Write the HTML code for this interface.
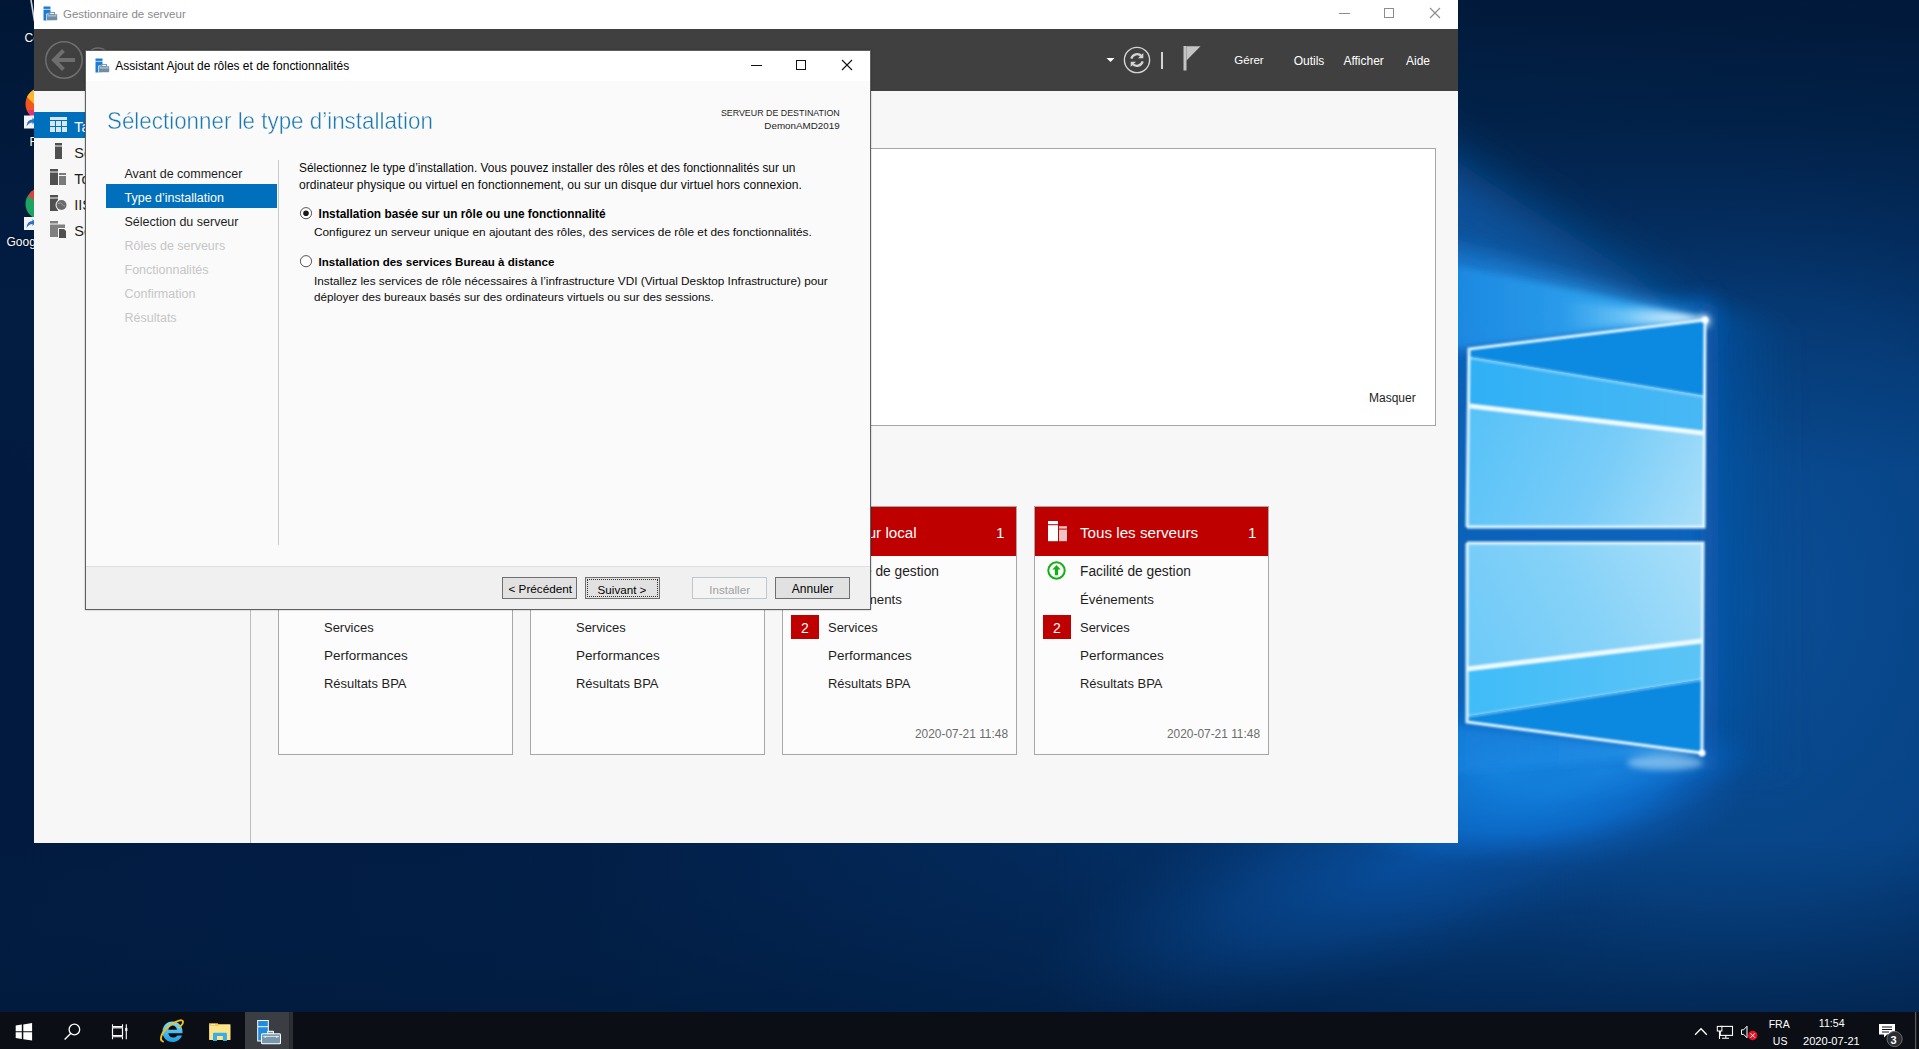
<!DOCTYPE html>
<html><head><meta charset="utf-8">
<style>
*{margin:0;padding:0;box-sizing:border-box}
html,body{width:1919px;height:1049px;overflow:hidden;font-family:"Liberation Sans",sans-serif;}
body{position:relative;background:#011633;}
.a{position:absolute}
.t{position:absolute;white-space:pre;line-height:1}
</style></head><body>
<div class="a" style="left:0;top:0;width:1919px;height:1049px;overflow:hidden"><svg width="1919" height="1049" viewBox="0 0 1919 1049">
<defs>
<linearGradient id="bgx" x1="0" y1="0" x2="1919" y2="0" gradientUnits="userSpaceOnUse">
 <stop offset="0" stop-color="#021a40"/>
 <stop offset="0.3" stop-color="#021e46"/>
 <stop offset="0.55" stop-color="#032a5c"/>
 <stop offset="0.75" stop-color="#043a78"/>
 <stop offset="1" stop-color="#03336c"/>
</linearGradient>
<linearGradient id="topd" x1="0" y1="0" x2="0" y2="1049" gradientUnits="userSpaceOnUse">
 <stop offset="0" stop-color="#011634" stop-opacity="0.9"/>
 <stop offset="0.12" stop-color="#011a3a" stop-opacity="0.75"/>
 <stop offset="0.3" stop-color="#021f45" stop-opacity="0.3"/>
 <stop offset="0.45" stop-color="#02234a" stop-opacity="0"/>
 <stop offset="0.8" stop-color="#02234a" stop-opacity="0"/>
 <stop offset="0.97" stop-color="#011b3c" stop-opacity="0.6"/>
</linearGradient>
<radialGradient id="rm" cx="1740" cy="600" r="560" gradientUnits="userSpaceOnUse" gradientTransform="translate(1740 600) scale(0.85 1) translate(-1740 -600)">
 <stop offset="0" stop-color="#0b4f98" stop-opacity="0.95"/>
 <stop offset="0.55" stop-color="#094a90" stop-opacity="0.7"/>
 <stop offset="1" stop-color="#063a78" stop-opacity="0"/>
</radialGradient>
<linearGradient id="pt" x1="1469" y1="420" x2="1704" y2="527" gradientUnits="userSpaceOnUse">
 <stop offset="0" stop-color="#58c2f8"/>
 <stop offset="0.55" stop-color="#78ccf8"/>
 <stop offset="1" stop-color="#aadff9"/>
</linearGradient>
<linearGradient id="ptm" x1="1469" y1="0" x2="1704" y2="0" gradientUnits="userSpaceOnUse">
 <stop offset="0" stop-color="#30b0f6"/>
 <stop offset="1" stop-color="#48b8f4"/>
</linearGradient>
<linearGradient id="pbm" x1="1467" y1="0" x2="1702" y2="0" gradientUnits="userSpaceOnUse">
 <stop offset="0" stop-color="#40bcf8"/>
 <stop offset="1" stop-color="#5cc4f6"/>
</linearGradient>
<linearGradient id="pb" x1="1467" y1="660" x2="1703" y2="543" gradientUnits="userSpaceOnUse">
 <stop offset="0" stop-color="#6ecaf8"/>
 <stop offset="0.5" stop-color="#86d2f8"/>
 <stop offset="1" stop-color="#aadff9"/>
</linearGradient>
<filter id="b40" x="-50%" y="-50%" width="200%" height="200%"><feGaussianBlur stdDeviation="40"/></filter>
<filter id="b25" x="-50%" y="-50%" width="200%" height="200%"><feGaussianBlur stdDeviation="25"/></filter>
<filter id="b10" x="-50%" y="-50%" width="200%" height="200%"><feGaussianBlur stdDeviation="10"/></filter>
<filter id="b5" x="-50%" y="-50%" width="200%" height="200%"><feGaussianBlur stdDeviation="5"/></filter>
<linearGradient id="ubs" x1="1300" y1="0" x2="1705" y2="0" gradientUnits="userSpaceOnUse"><stop offset="0" stop-color="#0a58b0" stop-opacity="0.75"/><stop offset="1" stop-color="#1a80d8" stop-opacity="0.45"/></linearGradient>
<linearGradient id="ubm" x1="1420" y1="0" x2="1705" y2="0" gradientUnits="userSpaceOnUse"><stop offset="0" stop-color="#1478d4" stop-opacity="0.75"/><stop offset="1" stop-color="#3aaaf4" stop-opacity="0.85"/></linearGradient>
<linearGradient id="ubc" x1="1440" y1="0" x2="1706" y2="0" gradientUnits="userSpaceOnUse"><stop offset="0" stop-color="#1a8ae6" stop-opacity="0.8"/><stop offset="0.7" stop-color="#34aaf2" stop-opacity="0.85"/><stop offset="1" stop-color="#e0f6ff" stop-opacity="1"/></linearGradient>
<linearGradient id="lbm" x1="1400" y1="0" x2="1702" y2="0" gradientUnits="userSpaceOnUse"><stop offset="0" stop-color="#1680dc" stop-opacity="0.85"/><stop offset="1" stop-color="#2a9cf0" stop-opacity="0.8"/></linearGradient>
<linearGradient id="lbc" x1="1440" y1="0" x2="1703" y2="0" gradientUnits="userSpaceOnUse"><stop offset="0" stop-color="#1a8ae8" stop-opacity="0.5"/><stop offset="0.7" stop-color="#2a9cf0" stop-opacity="0.6"/><stop offset="1" stop-color="#c0ecff" stop-opacity="0.9"/></linearGradient>
<linearGradient id="lgs" x1="1702" y1="753" x2="1050" y2="1000" gradientUnits="userSpaceOnUse"><stop offset="0" stop-color="#0c6ad0" stop-opacity="0.9"/><stop offset="0.45" stop-color="#0a58b0" stop-opacity="0.7"/><stop offset="1" stop-color="#063e80" stop-opacity="0"/></linearGradient>
<radialGradient id="rg1"><stop offset="0" stop-color="#0a5cb8" stop-opacity="0.6"/><stop offset="0.5" stop-color="#0a52a4" stop-opacity="0.4"/><stop offset="1" stop-color="#063e80" stop-opacity="0"/></radialGradient>
<radialGradient id="rg2"><stop offset="0" stop-color="#1480dc" stop-opacity="0.9"/><stop offset="0.6" stop-color="#0c6ccc" stop-opacity="0.6"/><stop offset="1" stop-color="#0a5cb8" stop-opacity="0"/></radialGradient>
<radialGradient id="rg3"><stop offset="0" stop-color="#2a9cf0" stop-opacity="0.9"/><stop offset="1" stop-color="#1a8ae6" stop-opacity="0"/></radialGradient>
<radialGradient id="rg4"><stop offset="0" stop-color="#1484e0" stop-opacity="0.9"/><stop offset="0.6" stop-color="#0c70d0" stop-opacity="0.55"/><stop offset="1" stop-color="#0a5cb8" stop-opacity="0"/></radialGradient>
<linearGradient id="halor" x1="1700" y1="0" x2="1800" y2="0" gradientUnits="userSpaceOnUse"><stop offset="0" stop-color="#0a5ab0" stop-opacity="0.8"/><stop offset="1" stop-color="#0a4a90" stop-opacity="0"/></linearGradient>
<linearGradient id="flare" x1="1560" y1="0" x2="1706" y2="0" gradientUnits="userSpaceOnUse"><stop offset="0" stop-color="#8ad8ff" stop-opacity="0"/><stop offset="1" stop-color="#f0fbff" stop-opacity="0.95"/></linearGradient>
<filter id="b3" x="-50%" y="-50%" width="200%" height="200%"><feGaussianBlur stdDeviation="3"/></filter>
<filter id="b1" x="-50%" y="-50%" width="200%" height="200%"><feGaussianBlur stdDeviation="1"/></filter>
</defs>
<rect width="1919" height="1049" fill="url(#bgx)"/>
<rect width="1919" height="1049" fill="url(#rm)"/>
<rect width="1919" height="1049" fill="url(#topd)"/>
<!-- halo2 -->
<polygon points="1440,330 1712,300 1712,770 1440,760" fill="#0a6ac6" opacity="0.8" filter="url(#b10)"/>
<polygon points="1700,300 1800,330 1800,780 1700,770" fill="url(#halor)" filter="url(#b10)"/>
<!-- upper beam soft -->
<polygon points="1300,60 1705,322 1300,380" fill="url(#ubs)" filter="url(#b25)"/>
<polygon points="1420,235 1705,320 1420,352" fill="url(#ubm)" filter="url(#b10)"/>
<polygon points="1440,262 1706,319 1440,350" fill="url(#ubc)" filter="url(#b3)"/>
<polygon points="1560,300 1706,319 1560,330" fill="url(#flare)" filter="url(#b3)"/>
<circle cx="1704" cy="321" r="7" fill="#d8f4ff" opacity="0.7" filter="url(#b3)"/>
<!-- lower glow -->
<ellipse cx="1420" cy="860" rx="400" ry="110" transform="rotate(-18 1420 860)" fill="url(#rg1)"/>
<ellipse cx="1560" cy="790" rx="200" ry="60" transform="rotate(-12 1560 790)" fill="url(#rg2)"/>
<ellipse cx="1600" cy="772" rx="120" ry="30" transform="rotate(-6 1600 772)" fill="url(#rg3)"/>
<ellipse cx="1500" cy="775" rx="250" ry="95" transform="rotate(2 1500 775)" fill="url(#rg4)"/>
<polygon points="1440,724 1703,753 1440,775" fill="url(#lbc)" filter="url(#b5)"/>
<!-- halo -->
<!-- panes -->
<polygon points="1469,349 1705,320 1704,527 1467,527" fill="url(#pt)"/>
<polygon points="1469,349 1705,320 1704,396 1468,357" fill="#0c8ae2"/>
<polygon points="1468,357 1704,396 1703,432 1470,405" fill="url(#ptm)"/>
<polygon points="1467,543 1703,543 1702,753 1467,722" fill="url(#pb)"/>
<polygon points="1467,716 1702,679 1702,753 1467,722" fill="#0b88e0"/>
<polygon points="1467,668 1702,640 1702,679 1467,716" fill="url(#pbm)"/>
<ellipse cx="1665" cy="763" rx="38" ry="7" fill="#bfe8ff" opacity="0.55" filter="url(#b3)"/>
<g filter="url(#b1)">
<polygon points="1468,356 1704,395 1704,398 1468,359" fill="#9ad8fa" opacity="0.7"/>
<polygon points="1467,715 1702,678 1702,681 1467,718" fill="#9ad8fa" opacity="0.6"/>
<polygon points="1470,403.5 1703,430.5 1703,435.5 1470,408.5" fill="#f0faff"/>
<polygon points="1467,666.5 1702,638.5 1702,643.5 1467,671.5" fill="#f0faff"/>
<polyline points="1467,527 1469,349 1705,320 1704,527 1467,527" fill="none" stroke="#e0f6ff" stroke-width="3"/>
<polyline points="1467,543 1703,543 1702,753 1467,722 1467,543" fill="none" stroke="#e0f6ff" stroke-width="3"/>
<circle cx="1705" cy="320" r="3.5" fill="#ffffff"/>
<circle cx="1702" cy="753" r="3.5" fill="#ffffff"/>
</g>
</svg>
</div>
<svg class="a" style="left:28px;top:0" width="8" height="22" viewBox="0 0 8 22"><path d="M3 0L6.5 21" stroke="#c8d0dc" stroke-width="1.6"/></svg>
<div class="t" style="left:24.60px;top:32.44px;font-size:12px;color:#ffffff;font-weight:400;text-shadow:0 0 2px #000">Co</div>
<svg class="a" style="left:0;top:80px" width="34" height="60" viewBox="0 0 34 60">
 <circle cx="41" cy="24" r="15.5" fill="#f2581c"/>
 <path d="M27 17 A15.5 15.5 0 0 1 34 9.5 L34 24Z" fill="#ffb52a"/>
 <path d="M27 30 A15.5 15.5 0 0 0 34 38 L34 30Z" fill="#e0347a"/>
 <rect x="24" y="35.5" width="11" height="13" fill="#f4f4f4"/>
 <path d="M26.5 46.5 Q27 39.5 32.5 39.5 L32.5 37.5 L35.5 41 L32.5 44.5 L32.5 42.5 Q29 42.5 26.5 46.5Z" fill="#2a6fd0"/>
</svg>
<div class="t" style="left:29.50px;top:135.64px;font-size:12px;color:#ffffff;font-weight:400;text-shadow:0 0 2px #000">Fi</div>
<svg class="a" style="left:0;top:180px" width="34" height="60" viewBox="0 0 34 60">
 <circle cx="41" cy="24" r="15.5" fill="#1ea362"/>
 <path d="M28 16 A15.5 15.5 0 0 1 34 9.5 L34 20Z" fill="#db4437"/>
 <rect x="24" y="37" width="11" height="13" fill="#f4f4f4"/>
 <path d="M26.5 48 Q27 41 32.5 41 L32.5 39 L35.5 42.5 L32.5 46 L32.5 44 Q29 44 26.5 48Z" fill="#2a6fd0"/>
</svg>
<div class="t" style="left:6.50px;top:235.64px;font-size:12px;color:#ffffff;font-weight:400;text-shadow:0 0 2px #000">Goog</div>
<div class="a" style="left:34px;top:0px;width:1424px;height:843px;background:#f7f7f7;"></div>
<div class="a" style="left:34px;top:0px;width:1424px;height:29px;background:#ffffff;"></div>
<svg class="a" style="left:43px;top:6px" width="15" height="15" viewBox="0 0 15 15">
  <rect x="0.5" y="0.5" width="7" height="2.4" fill="#1c7cd5"/>
  <rect x="0.5" y="3.6" width="7" height="10.9" fill="#1c7cd5"/>
  <rect x="3.2" y="7.6" width="11.6" height="7.2" rx="0.8" fill="#ffffff"/>
  <rect x="3.8" y="8.2" width="10.4" height="6" rx="0.4" fill="#6e8ea8"/>
  <rect x="6.3" y="6.4" width="5.2" height="2" fill="none" stroke="#6e8ea8" stroke-width="0.9"/>
  <path d="M4.6 9.9H13.4" stroke="#dfe7ee" stroke-width="0.8"/>
</svg>
<div class="t" style="left:63.00px;top:8.67px;font-size:11.5px;color:#8a8a8a;font-weight:400;">Gestionnaire de serveur</div>
<div class="a" style="left:1339px;top:13px;width:11px;height:1px;background:#8c8c8c;"></div>
<div class="a" style="left:1384px;top:8px;width:10px;height:10px;border:1px solid #8c8c8c"></div>
<svg class="a" style="left:1429px;top:7px" width="12" height="12" viewBox="0 0 12 12"><path d="M1 1L11 11M11 1L1 11" stroke="#8c8c8c" stroke-width="1.1"/></svg>
<div class="a" style="left:34px;top:29px;width:1424px;height:62px;background:#404040;"></div>
<svg class="a" style="left:44px;top:40px" width="40" height="40" viewBox="0 0 40 40">
  <circle cx="20" cy="20" r="18.2" fill="none" stroke="#6e6e6e" stroke-width="1.5"/>
  <path d="M10 20H31" stroke="#6e6e6e" stroke-width="4"/>
  <path d="M19.5 10.5L10 20L19.5 29.5" fill="none" stroke="#6e6e6e" stroke-width="4"/>
</svg>
<svg class="a" style="left:80px;top:40px" width="40" height="40" viewBox="0 0 40 40">
  <circle cx="18.1" cy="20.2" r="12.2" fill="none" stroke="#6e6e6e" stroke-width="1.5"/>
</svg>
<svg class="a" style="left:1106px;top:57px" width="9" height="6" viewBox="0 0 9 6"><path d="M0.5 1H8.5L4.5 5Z" fill="#ffffff"/></svg>
<svg class="a" style="left:1123px;top:46px" width="28" height="28" viewBox="0 0 28 28">
  <circle cx="14" cy="14" r="12.6" fill="none" stroke="#d4d4d4" stroke-width="1.4"/>
  <path d="M8.3 12.6A6 6 0 0 1 18.6 10.2" fill="none" stroke="#d4d4d4" stroke-width="2.2"/>
  <path d="M20.3 7V12.3H15Z" fill="#d4d4d4"/>
  <path d="M19.7 15.4A6 6 0 0 1 9.4 17.8" fill="none" stroke="#d4d4d4" stroke-width="2.2"/>
  <path d="M7.7 21V15.7H13Z" fill="#d4d4d4"/>
</svg>
<div class="a" style="left:1161px;top:52px;width:2px;height:17px;background:#d4d4d4;"></div>
<svg class="a" style="left:1183px;top:46px" width="19" height="25" viewBox="0 0 19 25">
  <rect x="0.5" y="0" width="3" height="24.5" fill="#c4c4c4"/>
  <path d="M3.5 0.3H17.5L3.5 14.5Z" fill="#c4c4c4"/>
</svg>
<div class="t" style="left:1234.30px;top:55.27px;font-size:11.5px;color:#ffffff;font-weight:400;">Gérer</div>
<div class="t" style="left:1293.70px;top:54.84px;font-size:12px;color:#ffffff;font-weight:400;">Outils</div>
<div class="t" style="left:1343.40px;top:54.84px;font-size:12px;color:#ffffff;font-weight:400;">Afficher</div>
<div class="t" style="left:1406.00px;top:54.84px;font-size:12px;color:#ffffff;font-weight:400;">Aide</div>
<div class="a" style="left:34px;top:112px;width:216px;height:26px;background:#0070bc;"></div>
<div class="a" style="left:250px;top:91px;width:1px;height:752px;background:#bcbcbc;"></div>
<svg class="a" style="left:50px;top:117px" width="18" height="17" viewBox="0 0 18 17"><rect x="0" y="0" width="17" height="3" fill="#d6e8f6"/><rect x="0" y="4" width="5" height="5" fill="#d6e8f6"/><rect x="6" y="4" width="5" height="5" fill="#d6e8f6"/><rect x="12" y="4" width="5" height="5" fill="#d6e8f6"/><rect x="0" y="10" width="5" height="5" fill="#d6e8f6"/><rect x="6" y="10" width="5" height="5" fill="#d6e8f6"/><rect x="12" y="10" width="5" height="5" fill="#d6e8f6"/></svg>
<div class="t" style="left:74.30px;top:119.73px;font-size:14.5px;color:#ffffff;font-weight:400;">Tableau de bord</div>
<svg class="a" style="left:50px;top:143px" width="18" height="17" viewBox="0 0 18 17"><rect x="5" y="0" width="7" height="2.5" fill="#505050"/><rect x="5" y="3.5" width="7" height="12.5" fill="#505050"/></svg>
<div class="t" style="left:74.30px;top:145.73px;font-size:14.5px;color:#1e1e1e;font-weight:400;">Serveur local</div>
<svg class="a" style="left:50px;top:169px" width="18" height="17" viewBox="0 0 18 17"><rect x="0" y="0" width="8" height="2.5" fill="#505050"/><rect x="0" y="3.5" width="8" height="12.5" fill="#505050"/><rect x="9" y="4" width="7" height="2" fill="#7a7a7a"/><rect x="9" y="7" width="7" height="9" fill="#7a7a7a"/></svg>
<div class="t" style="left:74.30px;top:171.73px;font-size:14.5px;color:#1e1e1e;font-weight:400;">Tous les serveurs</div>
<svg class="a" style="left:50px;top:195px" width="18" height="17" viewBox="0 0 18 17"><rect x="0" y="0" width="8" height="2.5" fill="#505050"/><rect x="0" y="3.5" width="8" height="12.5" fill="#505050"/><circle cx="11.5" cy="10" r="6" fill="#f7f7f7"/><circle cx="11.5" cy="10" r="5" fill="#6a6a6a"/><path d="M8 8.5Q11 7 12 9T15 11" stroke="#a0a0a0" fill="none" stroke-width="1"/></svg>
<div class="t" style="left:74.30px;top:197.73px;font-size:14.5px;color:#1e1e1e;font-weight:400;">IIS</div>
<svg class="a" style="left:50px;top:221px" width="18" height="17" viewBox="0 0 18 17"><rect x="0" y="0" width="8" height="2.5" fill="#808080"/><rect x="0" y="3.5" width="15" height="12.5" fill="#808080"/><rect x="8" y="7" width="8" height="10" fill="#f7f7f7"/><path d="M9 8H14L16 10V17H9Z" fill="#505050"/></svg>
<div class="t" style="left:74.30px;top:223.73px;font-size:14.5px;color:#1e1e1e;font-weight:400;">Services de fichiers et de stockage</div>
<div class="a" style="left:700px;top:148px;width:736px;height:278px;background:#ffffff;border:1px solid #a6a6a6"></div>
<div class="t" style="left:1369.00px;top:391.64px;font-size:12px;color:#1e1e1e;font-weight:400;">Masquer</div>
<div class="a" style="left:278px;top:506px;width:235px;height:249px;background:#fcfcfc;border:1px solid #a8a8a8"></div>
<div class="a" style="left:279px;top:507px;width:233px;height:49px;background:#be0000;"></div>
<svg class="a" style="left:291.5px;top:520.5px" width="20" height="21" viewBox="0 0 20 21"><rect x="0" y="0" width="10" height="3.2" fill="#fff"/><rect x="0" y="4.2" width="10" height="16" fill="#fff"/><rect x="11" y="5.2" width="8" height="2.4" fill="#f0c4c4"/><rect x="11" y="8.6" width="8" height="11.6" fill="#f0c4c4"/></svg>
<div class="t" style="left:324.00px;top:525.33px;font-size:15.2px;color:#ffffff;font-weight:400;">Rôles et groupes</div>
<div class="t" style="left:492.00px;top:525.33px;font-size:15.2px;color:#ffffff;font-weight:400;">1</div>
<div class="t" style="left:324.00px;top:565.04px;font-size:13.77px;color:#1e1e1e;font-weight:400;">Facilité de gestion</div>
<div class="t" style="left:324.00px;top:592.64px;font-size:13.3px;color:#1e1e1e;font-weight:400;">Événements</div>
<div class="t" style="left:324.00px;top:621.54px;font-size:12.95px;color:#1e1e1e;font-weight:400;">Services</div>
<div class="t" style="left:324.00px;top:649.21px;font-size:13.46px;color:#1e1e1e;font-weight:400;">Performances</div>
<div class="t" style="left:324.00px;top:677.95px;font-size:12.94px;color:#1e1e1e;font-weight:400;">Résultats BPA</div>
<div class="a" style="left:530px;top:506px;width:235px;height:249px;background:#fcfcfc;border:1px solid #a8a8a8"></div>
<div class="a" style="left:531px;top:507px;width:233px;height:49px;background:#be0000;"></div>
<svg class="a" style="left:543.5px;top:520.5px" width="20" height="21" viewBox="0 0 20 21"><rect x="0" y="0" width="10" height="3.2" fill="#fff"/><rect x="0" y="4.2" width="10" height="16" fill="#fff"/><rect x="11" y="5.2" width="8" height="2.4" fill="#f0c4c4"/><rect x="11" y="8.6" width="8" height="11.6" fill="#f0c4c4"/></svg>
<div class="t" style="left:576.00px;top:525.33px;font-size:15.2px;color:#ffffff;font-weight:400;">IIS</div>
<div class="t" style="left:744.00px;top:525.33px;font-size:15.2px;color:#ffffff;font-weight:400;">1</div>
<div class="t" style="left:576.00px;top:565.04px;font-size:13.77px;color:#1e1e1e;font-weight:400;">Facilité de gestion</div>
<div class="t" style="left:576.00px;top:592.64px;font-size:13.3px;color:#1e1e1e;font-weight:400;">Événements</div>
<div class="t" style="left:576.00px;top:621.54px;font-size:12.95px;color:#1e1e1e;font-weight:400;">Services</div>
<div class="t" style="left:576.00px;top:649.21px;font-size:13.46px;color:#1e1e1e;font-weight:400;">Performances</div>
<div class="t" style="left:576.00px;top:677.95px;font-size:12.94px;color:#1e1e1e;font-weight:400;">Résultats BPA</div>
<div class="a" style="left:782px;top:506px;width:235px;height:249px;background:#fcfcfc;border:1px solid #a8a8a8"></div>
<div class="a" style="left:783px;top:507px;width:233px;height:49px;background:#be0000;"></div>
<svg class="a" style="left:795.5px;top:520.5px" width="20" height="21" viewBox="0 0 20 21"><rect x="0" y="0" width="10" height="3.2" fill="#fff"/><rect x="0" y="4.2" width="10" height="16" fill="#fff"/><rect x="11" y="5.2" width="8" height="2.4" fill="#f0c4c4"/><rect x="11" y="8.6" width="8" height="11.6" fill="#f0c4c4"/></svg>
<div class="t" style="left:828.00px;top:525.33px;font-size:15.2px;color:#ffffff;font-weight:400;">Serveur local</div>
<div class="t" style="left:996.00px;top:525.33px;font-size:15.2px;color:#ffffff;font-weight:400;">1</div>
<div class="t" style="left:828.00px;top:565.04px;font-size:13.77px;color:#1e1e1e;font-weight:400;">Facilité de gestion</div>
<div class="t" style="left:828.00px;top:592.64px;font-size:13.3px;color:#1e1e1e;font-weight:400;">Événements</div>
<div class="t" style="left:828.00px;top:621.54px;font-size:12.95px;color:#1e1e1e;font-weight:400;">Services</div>
<div class="t" style="left:828.00px;top:649.21px;font-size:13.46px;color:#1e1e1e;font-weight:400;">Performances</div>
<div class="t" style="left:828.00px;top:677.95px;font-size:12.94px;color:#1e1e1e;font-weight:400;">Résultats BPA</div>
<svg class="a" style="left:794.5px;top:560.7px" width="19" height="19" viewBox="0 0 19 19"><circle cx="9.5" cy="9.5" r="8.2" fill="none" stroke="#12b012" stroke-width="2"/><path d="M9.5 4L13.6 8.6H11.1V14.3H7.9V8.6H5.4Z" fill="#12b012"/></svg>
<div class="a" style="left:791px;top:615px;width:28px;height:24px;background:#be0000;"></div>
<div class="t" style="left:801.00px;top:620.95px;font-size:14px;color:#ffffff;font-weight:400;">2</div>
<div class="t" style="right:911.00px;top:729.03px;font-size:11.9px;color:#6d6d6d;font-weight:400;">2020-07-21 11:48</div>
<div class="a" style="left:1034px;top:506px;width:235px;height:249px;background:#fcfcfc;border:1px solid #a8a8a8"></div>
<div class="a" style="left:1035px;top:507px;width:233px;height:49px;background:#be0000;"></div>
<svg class="a" style="left:1047.5px;top:520.5px" width="20" height="21" viewBox="0 0 20 21"><rect x="0" y="0" width="10" height="3.2" fill="#fff"/><rect x="0" y="4.2" width="10" height="16" fill="#fff"/><rect x="11" y="5.2" width="8" height="2.4" fill="#f0c4c4"/><rect x="11" y="8.6" width="8" height="11.6" fill="#f0c4c4"/></svg>
<div class="t" style="left:1080.00px;top:525.33px;font-size:15.2px;color:#ffffff;font-weight:400;">Tous les serveurs</div>
<div class="t" style="left:1248.00px;top:525.33px;font-size:15.2px;color:#ffffff;font-weight:400;">1</div>
<div class="t" style="left:1080.00px;top:565.04px;font-size:13.77px;color:#1e1e1e;font-weight:400;">Facilité de gestion</div>
<div class="t" style="left:1080.00px;top:592.64px;font-size:13.3px;color:#1e1e1e;font-weight:400;">Événements</div>
<div class="t" style="left:1080.00px;top:621.54px;font-size:12.95px;color:#1e1e1e;font-weight:400;">Services</div>
<div class="t" style="left:1080.00px;top:649.21px;font-size:13.46px;color:#1e1e1e;font-weight:400;">Performances</div>
<div class="t" style="left:1080.00px;top:677.95px;font-size:12.94px;color:#1e1e1e;font-weight:400;">Résultats BPA</div>
<svg class="a" style="left:1046.5px;top:560.7px" width="19" height="19" viewBox="0 0 19 19"><circle cx="9.5" cy="9.5" r="8.2" fill="none" stroke="#12b012" stroke-width="2"/><path d="M9.5 4L13.6 8.6H11.1V14.3H7.9V8.6H5.4Z" fill="#12b012"/></svg>
<div class="a" style="left:1043px;top:615px;width:28px;height:24px;background:#be0000;"></div>
<div class="t" style="left:1053.00px;top:620.95px;font-size:14px;color:#ffffff;font-weight:400;">2</div>
<div class="t" style="right:659.00px;top:729.03px;font-size:11.9px;color:#6d6d6d;font-weight:400;">2020-07-21 11:48</div>
<div class="a" style="left:85px;top:50px;width:786px;height:560px;background:#fafafa;border:1px solid #5f5f5f;box-shadow:0 0 1.5px rgba(0,0,0,.35)"></div>
<div class="a" style="left:86px;top:51px;width:784px;height:30px;background:#ffffff;"></div>
<svg class="a" style="left:94.5px;top:57.5px" width="15" height="15" viewBox="0 0 15 15">
  <rect x="0.5" y="0.5" width="7" height="2.4" fill="#1c7cd5"/>
  <rect x="0.5" y="3.6" width="7" height="10.9" fill="#1c7cd5"/>
  <rect x="3.2" y="7.6" width="11.6" height="7.2" rx="0.8" fill="#ffffff"/>
  <rect x="3.8" y="8.2" width="10.4" height="6" rx="0.4" fill="#6e8ea8"/>
  <rect x="6.3" y="6.4" width="5.2" height="2" fill="none" stroke="#6e8ea8" stroke-width="0.9"/>
  <path d="M4.6 9.9H13.4" stroke="#dfe7ee" stroke-width="0.8"/>
</svg>
<div class="t" style="left:115.30px;top:61.08px;font-size:11.96px;color:#000000;font-weight:400;">Assistant Ajout de rôles et de fonctionnalités</div>
<div class="a" style="left:751px;top:65px;width:11px;height:1px;background:#111111;"></div>
<div class="a" style="left:796px;top:60px;width:10px;height:10px;border:1px solid #111111"></div>
<svg class="a" style="left:841px;top:59px" width="12" height="12" viewBox="0 0 12 12"><path d="M1 1L11 11M11 1L1 11" stroke="#111111" stroke-width="1.1"/></svg>
<div class="t" style="left:107.00px;top:109.28px;font-size:24px;color:#1a78b0;font-weight:400;transform:scaleX(0.9325);transform-origin:0 0;-webkit-text-stroke:0.45px #fafafa">Sélectionner le type d’installation</div>
<div class="t" style="right:1079.30px;top:109.19px;font-size:8.87px;color:#1e1e1e;font-weight:400;">SERVEUR DE DESTINATION</div>
<div class="t" style="right:1079.30px;top:120.67px;font-size:9.84px;color:#1e1e1e;font-weight:400;">DemonAMD2019</div>
<div class="a" style="left:106px;top:184px;width:171px;height:24px;background:#0070bc;"></div>
<div class="a" style="left:278px;top:160px;width:1px;height:385px;background:#c8c8c8;"></div>
<div class="t" style="left:124.50px;top:168.02px;font-size:12.5px;color:#1e1e1e;font-weight:400;">Avant de commencer</div>
<div class="t" style="left:124.50px;top:192.02px;font-size:12.5px;color:#ffffff;font-weight:400;">Type d’installation</div>
<div class="t" style="left:124.50px;top:216.02px;font-size:12.5px;color:#1e1e1e;font-weight:400;">Sélection du serveur</div>
<div class="t" style="left:124.50px;top:240.02px;font-size:12.5px;color:#c6c6c6;font-weight:400;">Rôles de serveurs</div>
<div class="t" style="left:124.50px;top:264.02px;font-size:12.5px;color:#c6c6c6;font-weight:400;">Fonctionnalités</div>
<div class="t" style="left:124.50px;top:288.02px;font-size:12.5px;color:#c6c6c6;font-weight:400;">Confirmation</div>
<div class="t" style="left:124.50px;top:312.02px;font-size:12.5px;color:#c6c6c6;font-weight:400;">Résultats</div>
<div class="t" style="left:299.00px;top:162.94px;font-size:11.89px;color:#0a0a0a;font-weight:400;">Sélectionnez le type d’installation. Vous pouvez installer des rôles et des fonctionnalités sur un</div>
<div class="t" style="left:299.00px;top:178.96px;font-size:12.1px;color:#0a0a0a;font-weight:400;">ordinateur physique ou virtuel en fonctionnement, ou sur un disque dur virtuel hors connexion.</div>
<svg class="a" style="left:299px;top:206px" width="14" height="14" viewBox="0 0 14 14"><circle cx="7" cy="7.2" r="5.6" fill="#ffffff" stroke="#444444" stroke-width="0.9"/><circle cx="7" cy="7.2" r="2.8" fill="#1a1a1a"/></svg>
<div class="t" style="left:318.60px;top:209.17px;font-size:11.85px;color:#000000;font-weight:700;">Installation basée sur un rôle ou une fonctionnalité</div>
<div class="t" style="left:314.00px;top:227.09px;font-size:11.83px;color:#0a0a0a;font-weight:400;">Configurez un serveur unique en ajoutant des rôles, des services de rôle et des fonctionnalités.</div>
<svg class="a" style="left:299px;top:254px" width="14" height="14" viewBox="0 0 14 14"><circle cx="7" cy="7.2" r="5.6" fill="#ffffff" stroke="#444444" stroke-width="0.9"/></svg>
<div class="t" style="left:318.60px;top:257.43px;font-size:11.54px;color:#000000;font-weight:700;">Installation des services Bureau à distance</div>
<div class="t" style="left:314.00px;top:275.02px;font-size:11.79px;color:#0a0a0a;font-weight:400;">Installez les services de rôle nécessaires à l’infrastructure VDI (Virtual Desktop Infrastructure) pour</div>
<div class="t" style="left:314.00px;top:291.21px;font-size:11.68px;color:#0a0a0a;font-weight:400;">déployer des bureaux basés sur des ordinateurs virtuels ou sur des sessions.</div>
<div class="a" style="left:86px;top:566px;width:784px;height:43px;background:#f0f0f0;"></div>
<div class="a" style="left:86px;top:566px;width:784px;height:1px;background:#dfdfdf;"></div>
<div class="a" style="left:502px;top:577px;width:75px;height:22px;background:#e1e1e1;border:1px solid #6f6f6f"></div><div class="t" style="left:508.50px;top:583.49px;font-size:11.71px;color:#000000;font-weight:400;">&lt; Précédent</div>
<div class="a" style="left:585px;top:577px;width:75px;height:22px;background:#e1e1e1;border:1px solid #6f6f6f"></div><div class="a" style="left:587px;top:579px;width:71px;height:18px;border:1px dotted #333"></div><div class="t" style="left:597.60px;top:583.56px;font-size:11.63px;color:#000000;font-weight:400;">Suivant &gt;</div>
<div class="a" style="left:692px;top:577px;width:75px;height:22px;background:#f4f4f4;border:1px solid #bfc6cc"></div><div class="t" style="left:709.30px;top:583.54px;font-size:11.65px;color:#a0a0a0;font-weight:400;">Installer</div>
<div class="a" style="left:775px;top:577px;width:75px;height:22px;background:#e1e1e1;border:1px solid #6f6f6f"></div><div class="t" style="left:791.80px;top:583.21px;font-size:12.04px;color:#000000;font-weight:400;">Annuler</div>
<div class="a" style="left:0px;top:1012px;width:1919px;height:37px;background:#0b0f15;"></div>
<svg class="a" style="left:0;top:1012px" width="1919" height="37" viewBox="0 1012 1919 37">
 <!-- start -->
 <path d="M15.7 1025.6L21.8 1024.6V1031.2H15.7Z M23.3 1024.4L32.1 1023.1V1031.2H23.3Z M15.7 1032.3H21.8V1039L15.7 1038.1Z M23.3 1032.3H32.1V1040.5L23.3 1039.2Z" fill="#ffffff"/>
 <!-- search -->
 <circle cx="74.4" cy="1029.5" r="5.3" fill="none" stroke="#ffffff" stroke-width="1.3"/>
 <path d="M70.6 1033.4L64.6 1039.6" stroke="#ffffff" stroke-width="1.4"/>
 <!-- task view -->
 <path d="M112.5 1024.2V1026.5H122.5V1024.2 M112.5 1039.2V1036.8H122.5V1039.2" fill="none" stroke="#ffffff" stroke-width="1.1"/>
 <rect x="112.5" y="1027.8" width="10" height="7.8" fill="none" stroke="#ffffff" stroke-width="1.2"/>
 <path d="M126.3 1024.2V1039.2" stroke="#ffffff" stroke-width="1.1"/>
 <rect x="125.2" y="1028" width="2.2" height="3" fill="#ffffff"/>
 <!-- IE -->
 <defs><linearGradient id="ieg" x1="0" y1="0" x2="0" y2="1"><stop offset="0" stop-color="#7fdcfa"/><stop offset="1" stop-color="#1e9be0"/></linearGradient></defs>
 <path d="M172.5 1021.5C178.5 1021.5 182.5 1026 182.5 1031.5V1033.3H168.3C168.8 1036 170.5 1037.6 173 1037.6C175 1037.6 176.5 1036.8 177.6 1035.5H182C180.6 1039.5 177 1042 172.5 1042C166.5 1042 162.5 1037.5 162.5 1031.7C162.5 1026 166.5 1021.5 172.5 1021.5Z M168.3 1029.8H177C176.6 1027.2 174.8 1025.6 172.6 1025.6C170.4 1025.6 168.7 1027.2 168.3 1029.8Z" fill="url(#ieg)" fill-rule="evenodd"/>
 <path d="M163 1041.5C158.5 1039.5 162 1031 170 1025.5C177 1020.5 182.5 1019 183 1021.5C183.3 1023 181.5 1025.5 179 1027.5" fill="none" stroke="#f0c020" stroke-width="1.9" stroke-linecap="round"/>
 <!-- explorer -->
 <rect x="209.1" y="1024.2" width="21.4" height="15.9" rx="0.6" fill="#fde58a"/>
 <path d="M209.1 1023.2H217.6L218.9 1024.6V1025.8H209.1Z" fill="#f6c83e"/>
 <rect x="211" y="1024" width="4" height="1" fill="#d8eef8"/>
 <path d="M213 1041V1033.8Q213 1032.8 214 1032.8H226Q226.9 1032.8 226.9 1033.8V1041H222.9V1036H217V1041Z" fill="#36aeea"/>
 <!-- active SM button -->
 <rect x="245" y="1012" width="44.2" height="37" fill="#3a3d42"/>
 <rect x="289.2" y="1012" width="3.8" height="37" fill="#2c2f34"/>
 <rect x="257.2" y="1020" width="11.6" height="21.5" fill="#ffffff"/>
 <rect x="258.2" y="1021" width="9.6" height="5.2" fill="#1f8ce0"/>
 <rect x="258.2" y="1027.2" width="9.6" height="13.3" fill="#1f8ce0"/>
 <rect x="267.2" y="1030.8" width="6.8" height="4" rx="1" fill="#ffffff"/>
 <rect x="268.2" y="1031.8" width="4.8" height="2" fill="#7a96ac"/>
 <rect x="261" y="1033.2" width="20" height="11" rx="1.5" fill="#ffffff"/>
 <rect x="262" y="1034.2" width="18" height="9" rx="0.8" fill="#7896ac"/>
 <path d="M263.2 1036.4H279" stroke="#e8eff4" stroke-width="0.9"/>
 <circle cx="265.2" cy="1037" r="0.8" fill="#ffffff"/>
 <circle cx="276.8" cy="1037" r="0.8" fill="#ffffff"/>
 <!-- tray -->
 <path d="M1695.1 1034.8L1701 1028.8L1706.8 1034.8" fill="none" stroke="#ffffff" stroke-width="1.3"/>
 <rect x="1720.3" y="1026.4" width="12.2" height="9" fill="none" stroke="#ffffff" stroke-width="1.1"/>
 <rect x="1717.3" y="1026.4" width="4.6" height="4.6" fill="#0b0f15" stroke="#ffffff" stroke-width="1"/>
 <path d="M1719.5 1031V1039 M1722 1038.2H1729 M1725.8 1035.5V1038.2" stroke="#ffffff" stroke-width="1.1"/>
 <path d="M1741.5 1029.8H1743.7L1747 1026.2V1037.8L1743.7 1034.4H1741.5Z" fill="none" stroke="#ffffff" stroke-width="1"/>
 <circle cx="1752.7" cy="1035.5" r="4.7" fill="#e81123"/>
 <path d="M1750.5 1033.3L1754.9 1037.7M1754.9 1033.3L1750.5 1037.7" stroke="#ffffff" stroke-width="1"/>
 <!-- action center -->
 <path d="M1879 1024H1895V1034.5H1887L1884 1037.5V1034.5H1879Z" fill="#ffffff"/>
 <path d="M1882 1027H1892M1882 1029.5H1892M1882 1032H1889" stroke="#0b0f15" stroke-width="1"/>
 <circle cx="1894.6" cy="1039" r="7.6" fill="#2b2d30" stroke="#6a6a6a" stroke-width="1"/>
 <rect x="1915" y="1012" width="1.2" height="37" fill="#5a5a5a"/>
</svg>

<div class="t" style="left:1768.70px;top:1018.71px;font-size:10.5px;color:#ffffff;font-weight:400;">FRA</div>
<div class="t" style="left:1772.80px;top:1036.31px;font-size:10.5px;color:#ffffff;font-weight:400;">US</div>
<div class="t" style="left:1818.80px;top:1018.43px;font-size:10.6px;color:#ffffff;font-weight:400;">11:54</div>
<div class="t" style="left:1803.00px;top:1035.80px;font-size:11.1px;color:#ffffff;font-weight:400;">2020-07-21</div>
<div class="t" style="left:1890.60px;top:1034.69px;font-size:11px;color:#ffffff;font-weight:700;">3</div>
</body></html>
